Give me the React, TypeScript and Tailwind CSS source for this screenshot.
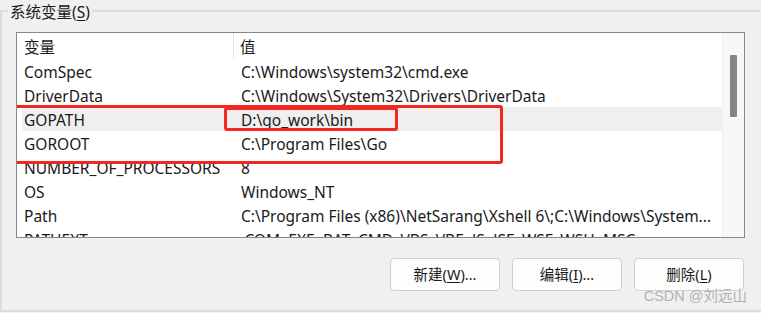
import React from 'react';

const rows = [
  { name: 'ComSpec', value: 'C:\\Windows\\system32\\cmd.exe' },
  { name: 'DriverData', value: 'C:\\Windows\\System32\\Drivers\\DriverData' },
  { name: 'GOPATH', value: 'D:\\go_work\\bin', active: true },
  { name: 'GOROOT', value: 'C:\\Program Files\\Go' },
  { name: 'NUMBER_OF_PROCESSORS', value: '8' },
  { name: 'OS', value: 'Windows_NT' },
  { name: 'Path', value: 'C:\\Program Files (x86)\\NetSarang\\Xshell 6\\;C:\\Windows\\System...' },
  { name: 'PATHEXT', value: '.COM;.EXE;.BAT;.CMD;.VBS;.VBE;.JS;.JSE;.WSF;.WSH;.MSC' },
];

const font = { fontFamily: '"Noto Sans", "Noto Sans CJK SC", sans-serif' };

function Button({ label, mnemonic, suffix }: { label: string; mnemonic: string; suffix: string }) {
  return (
    <button className="w-[110px] h-[33px] rounded-[4px] border border-[#d0d0d0] bg-[#fdfdfd] text-[14.5px] text-[#1a1a1a] flex items-center justify-center">
      {label}(<span className="underline underline-offset-2">{mnemonic}</span>){suffix}
    </button>
  );
}

export default function App() {
  return (
    <div className="w-[761px] h-[313px] bg-[#f0f0f0] overflow-hidden text-[#1a1a1a]" style={font}>
      <div className="relative mt-[10px] h-[302px] border-l-2 border-t-2 border-b-2 border-[#dcdcdc]">
        {/* group box caption */}
        <div className="absolute -top-[10px] left-[6px] bg-[#f0f0f0] px-[2px] text-[15.5px] leading-[20px]">
          系统变量(<span className="underline underline-offset-2">S</span>)
        </div>

        {/* list view */}
        <div className="relative ml-[14px] mt-[20px] w-[729px] h-[206px] border border-[#828790] bg-white flex overflow-hidden">
          <div className="flex-1 flex flex-col">
            <div className="flex h-[26px] shrink-0 text-[15.5px] items-center">
              <div className="w-[217px] pl-[7px] pt-[4px] h-full flex items-center border-r border-[#e5e5e5]">变量</div>
              <div className="pl-[6px] pt-[4px]">值</div>
            </div>
            {rows.map((r) => (
              <div key={r.name} className="h-[24px] shrink-0 pl-[5px] text-[15.5px]">
                <div className={`flex h-full items-center pt-[4px] ${r.active ? 'bg-[#efefef]' : ''}`}>
                  <div className="w-[212px] pl-[2px] whitespace-nowrap">{r.name}</div>
                  <div className="pl-[7px] whitespace-nowrap">{r.value}</div>
                </div>
              </div>
            ))}
          </div>
          {/* scrollbar */}
          <div className="w-[22px] shrink-0 border-l border-[#f0f0f0] bg-[#f7f7f7] flex justify-center pt-[22px]">
            <div className="w-[7px] h-[62px] bg-[#858585] rounded-[1px]" />
          </div>

          {/* red annotation boxes */}
          <div className="absolute left-[-4px] top-[72px] w-[490px] h-[59px] border-[3px] border-[#f5261f] rounded-[3px]" />
          <div className="absolute left-[207px] top-[74px] w-[174px] h-[24px] border-[3px] border-[#f5261f] rounded-[3px]" />
        </div>

        {/* buttons */}
        <div className="flex justify-end gap-[12px] mt-[20px] pr-[17px]">
          <Button label="新建" mnemonic="W" suffix="..." />
          <Button label="编辑" mnemonic="I" suffix="..." />
          <Button label="删除" mnemonic="L" suffix="" />
        </div>

        <div className="absolute right-[14px] bottom-[6px] text-[14.5px] leading-[16px] text-[#a0a0a0]/80 pointer-events-none" style={{ fontFamily: '"Liberation Sans", "Noto Sans CJK SC", sans-serif' }}>
          CSDN @刘远山
        </div>
      </div>
    </div>
  );
}
